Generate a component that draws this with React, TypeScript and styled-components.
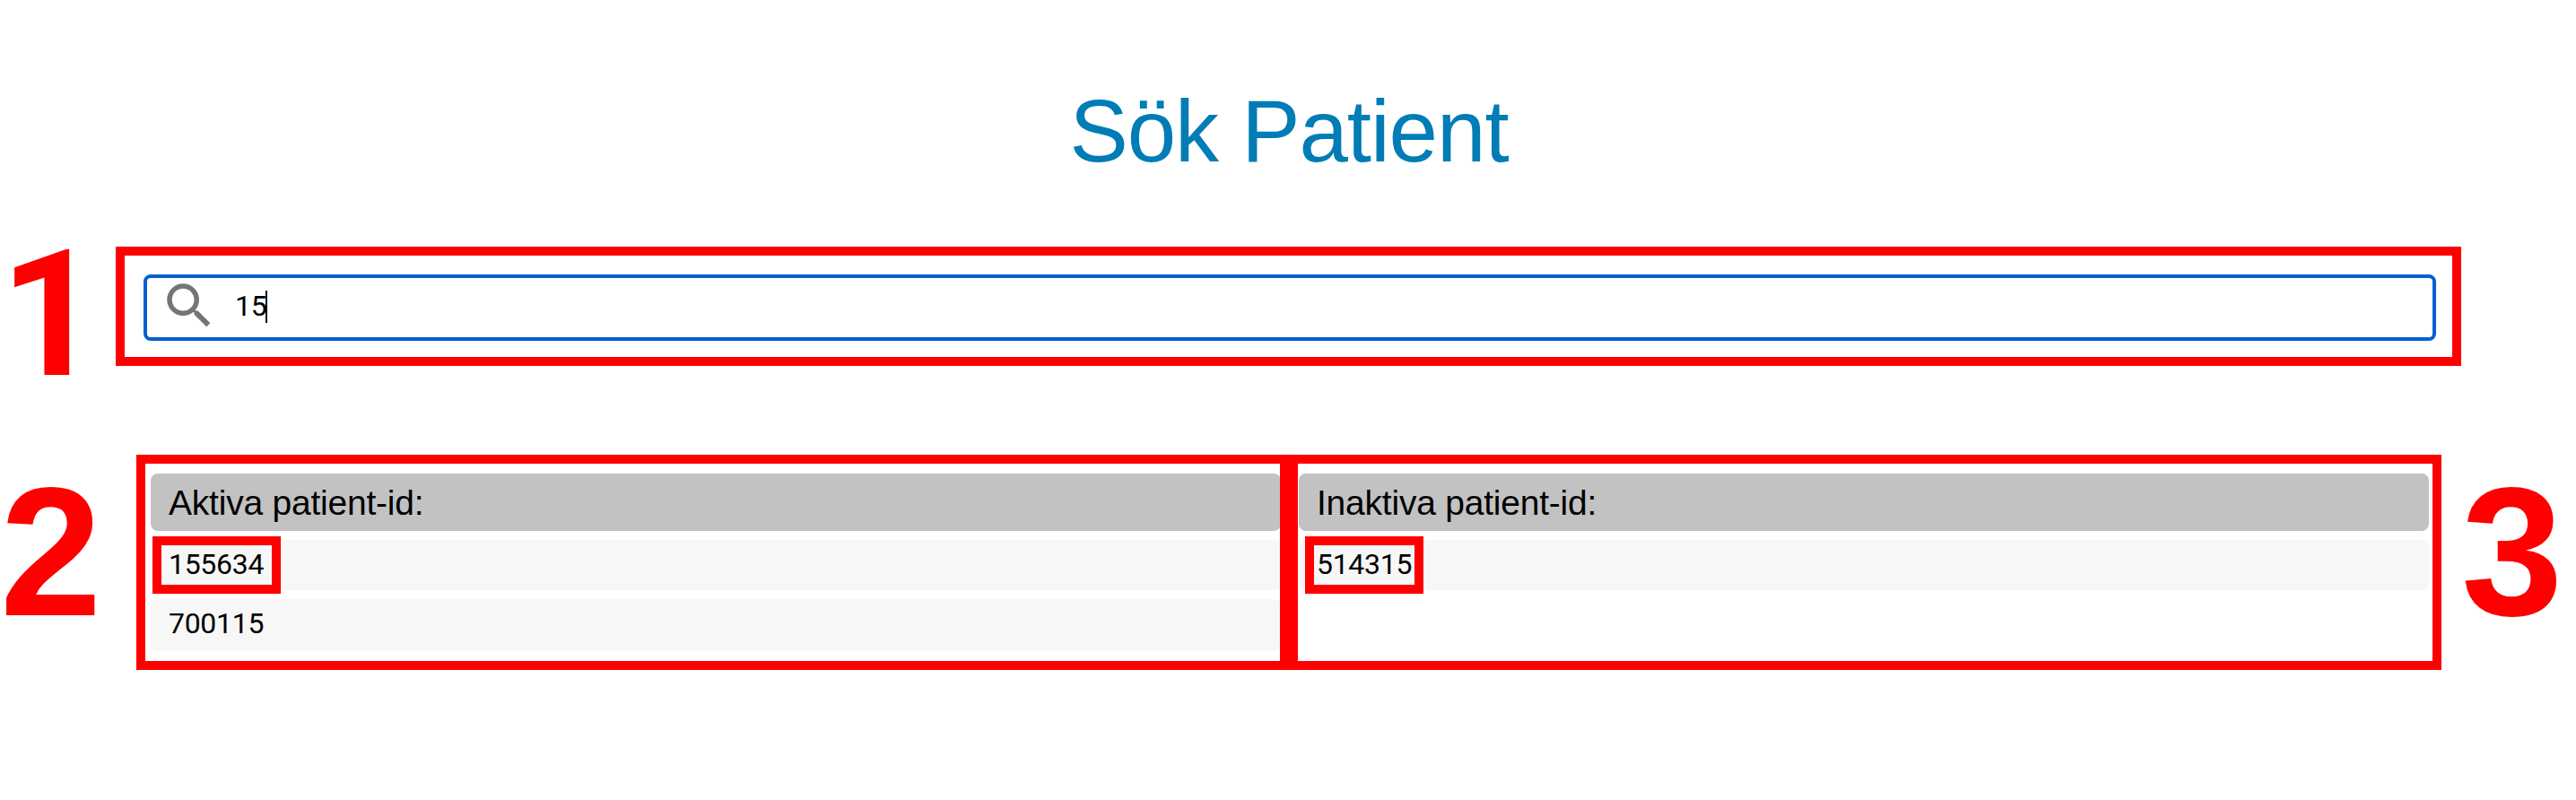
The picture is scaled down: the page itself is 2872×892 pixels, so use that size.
import React from "react";
import styled, { createGlobalStyle } from "styled-components";

const RED = "#ff0000";
const DIGITS = `Roboto, "Liberation Sans", Arial, sans-serif`;

const GlobalStyle = createGlobalStyle`
  *, *::before, *::after { box-sizing: border-box; }
  body {
    margin: 0;
    background: #fff;
    color: #000;
    font-family: "Liberation Sans", Arial, Helvetica, sans-serif;
  }
`;

const Page = styled.main`
  width: 2872px;
  height: 892px;
  padding-top: 86px;
`;

const Title = styled.h1`
  margin: 0 0 69px;
  padding-left: 2px;
  line-height: 120px;
  font-size: 98px;
  font-weight: 400;
  letter-spacing: -1.1px;
  text-align: center;
  color: #007cb6;
`;

const Section = styled.section<{ $height: number; $gap?: number }>`
  display: flex;
  height: ${(p) => p.$height}px;
  margin-bottom: ${(p) => p.$gap ?? 0}px;
`;

const Marker = styled.div<{ $width: number; $indent: number; $top: number; $plain?: boolean }>`
  flex: none;
  width: ${(p) => p.$width}px;
  height: 200px;
  margin-top: ${(p) => p.$top}px;
  text-indent: ${(p) => p.$indent}px;
  line-height: 200px;
  font-family: ${(p) => (p.$plain ? DIGITS : "inherit")};
  font-size: ${(p) => (p.$plain ? 197 : 204)}px;
  font-weight: 700;
  color: ${RED};
`;

const SearchFrame = styled.div`
  width: 2615px;
  border: 10px solid ${RED};
  padding: 21px 18px 18px 21px;
`;

const SearchField = styled.label`
  display: flex;
  height: 74px;
  border: 4px solid #0060d0;
  border-radius: 8px;
  background: #fff;
`;

const SearchIcon = styled.svg`
  flex: none;
  width: 66px;
  height: 66px;
  margin: -2px 0 0 14px;
  fill: #757575;
`;

const Query = styled.span`
  margin-left: 18px;
  line-height: 62px;
  font-family: ${DIGITS};
  font-size: 32px;
  letter-spacing: -0.3px;
`;

const Caret = styled.span`
  width: 2px;
  height: 36px;
  margin: 14px 0 0 -1.3px;
  background: #000;
`;

const Column = styled.div<{ $left: number }>`
  width: 1285px;
  border: 10px solid ${RED};
  padding: 11px 0 0 ${(p) => p.$left}px;
  overflow: hidden;
`;

const ColumnHeader = styled.h2`
  margin: 0 0 10px;
  width: 1260px;
  height: 64px;
  padding-left: 20px;
  border-radius: 8px;
  background: #c2c2c2;
  line-height: 65px;
  font-size: 39px;
  font-weight: 400;
  letter-spacing: -0.22px;
`;

const PatientRow = styled.div<{ $height: number }>`
  position: relative;
  width: 1260px;
  height: ${(p) => p.$height}px;
  margin-bottom: 10px;
  padding-left: 20px;
  border-radius: 8px;
  background: #f7f7f7;
  line-height: 54px;
  font-family: ${DIGITS};
  font-size: 32px;
  letter-spacing: -0.3px;
`;

const Highlight = styled.span<{ $left: number; $width: number }>`
  position: absolute;
  top: -4px;
  left: ${(p) => p.$left}px;
  width: ${(p) => p.$width}px;
  height: 64px;
  border: 10px solid ${RED};
`;

export default function App() {
  return (
    <>
      <GlobalStyle />
      <Page>
        <Title>Sök Patient</Title>
        <Section $height={133} $gap={99}>
          <Marker $width={129} $indent={0} $top={-24} $plain>1</Marker>
          <SearchFrame>
            <SearchField>
              <SearchIcon viewBox="0 0 24 24">
                <path d="M15.5 14h-.79l-.28-.27A6.471 6.471 0 0 0 16 9.5 6.5 6.5 0 1 0 9.5 16c1.61 0 3.09-.59 4.23-1.57l.27.28v.79l5 4.99L20.49 19l-4.99-5zm-6 0C7.01 14 5 11.99 5 9.5S7.01 5 9.5 5 14 7.01 14 9.5 11.99 14 9.5 14z" />
              </SearchIcon>
              <Query>15</Query>
              <Caret />
            </SearchField>
          </SearchFrame>
        </Section>
        <Section $height={240}>
          <Marker $width={152} $indent={0} $top={8}>2</Marker>
          <Column $left={6}>
            <ColumnHeader>Aktiva patient-id:</ColumnHeader>
            <PatientRow $height={56}>
              155634
              <Highlight $left={2} $width={143} />
            </PatientRow>
            <PatientRow $height={58}>700115</PatientRow>
          </Column>
          <Column $left={1}>
            <ColumnHeader>Inaktiva patient-id:</ColumnHeader>
            <PatientRow $height={56}>
              514315
              <Highlight $left={7} $width={132} />
            </PatientRow>
          </Column>
          <Marker $width={150} $indent={22} $top={8}>3</Marker>
        </Section>
      </Page>
    </>
  );
}
